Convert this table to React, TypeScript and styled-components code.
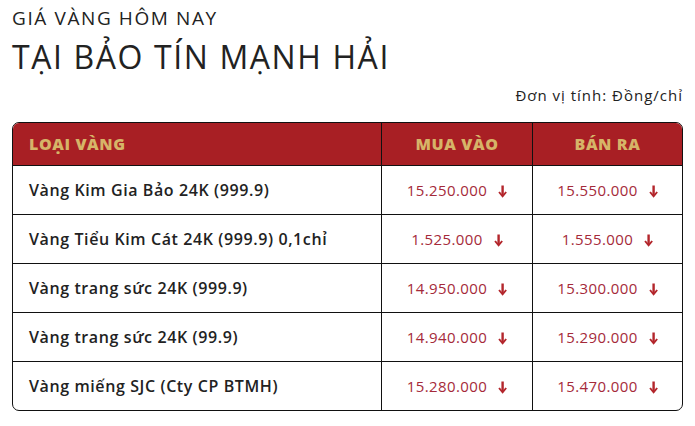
import React from 'react';
import styled, { createGlobalStyle } from 'styled-components';

const GlobalStyle = createGlobalStyle`
  body {
    margin: 0;
    background: #ffffff;
    font-family: "Open Sans", "Noto Sans", sans-serif;
    color: #222222;
  }
`;

interface PriceRow {
  name: string;
  buy: string;
  sell: string;
}

const rows: PriceRow[] = [
  { name: 'Vàng Kim Gia Bảo 24K (999.9)', buy: '15.250.000', sell: '15.550.000' },
  { name: 'Vàng Tiểu Kim Cát 24K (999.9) 0,1chỉ', buy: '1.525.000', sell: '1.555.000' },
  { name: 'Vàng trang sức 24K (999.9)', buy: '14.950.000', sell: '15.300.000' },
  { name: 'Vàng trang sức 24K (99.9)', buy: '14.940.000', sell: '15.290.000' },
  { name: 'Vàng miếng SJC (Cty CP BTMH)', buy: '15.280.000', sell: '15.470.000' },
];

const DownArrow: React.FC = () => (
  <ArrowIcon width="9" height="13" viewBox="0 0 9 13">
    <rect x="3.4" y="0.5" width="2.4" height="10" fill="#b3262c" />
    <path d="M0.3 7.4 L4.6 12.8 L8.9 7.4 L7.4 6.5 L4.6 10 L1.8 6.5 Z" fill="#b3262c" />
  </ArrowIcon>
);

const App: React.FC = () => {
  return (
    <>
      <GlobalStyle />
      <Page>
        <Heading>
          <Kicker>GIÁ VÀNG HÔM NAY</Kicker>
          <Title>TẠI BẢO TÍN MẠNH HẢI</Title>
        </Heading>
        <Unit>Đơn vị tính: Đồng/chỉ</Unit>
        <Table>
          <thead>
            <tr>
              <HeadCell $align="left">LOẠI VÀNG</HeadCell>
              <HeadCell>MUA VÀO</HeadCell>
              <HeadCell>BÁN RA</HeadCell>
            </tr>
          </thead>
          <tbody>
            {rows.map((row) => (
              <tr key={row.name}>
                <NameCell>{row.name}</NameCell>
                <PriceCell>
                  <Price>
                    {row.buy}
                    <DownArrow />
                  </Price>
                </PriceCell>
                <PriceCell>
                  <Price>
                    {row.sell}
                    <DownArrow />
                  </Price>
                </PriceCell>
              </tr>
            ))}
          </tbody>
        </Table>
      </Page>
    </>
  );
};

const Page = styled.div`
  width: 671px;
  padding: 0 12px;
  display: flex;
  flex-direction: column;
`;

const Heading = styled.div`
  display: flex;
  flex-direction: column;
  padding-top: 6px;
`;

const Kicker = styled.h2`
  margin: 0;
  font-size: 19px;
  font-weight: 400;
  line-height: 24px;
  letter-spacing: 1.6px;
  color: #222;
`;

const Title = styled.h1`
  margin: 0;
  margin-top: 7px;
  font-size: 32px;
  font-weight: 400;
  line-height: 40px;
  letter-spacing: 1.6px;
  color: #222;
`;

const Unit = styled.div`
  align-self: flex-end;
  margin-top: 8px;
  font-size: 15px;
  line-height: 20px;
  letter-spacing: 1px;
  color: #222;
`;

const Table = styled.table`
  margin-top: 17px;
  width: 100%;
  border-collapse: separate;
  border-spacing: 0;
  border: 1px solid #111;
  border-radius: 7px;
  overflow: hidden;

  tr > * {
    border-right: 1px solid #111;
    border-bottom: 1px solid #111;
  }
  tr > *:last-child {
    border-right: none;
  }
  tbody tr:last-child > * {
    border-bottom: none;
  }
`;

const HeadCell = styled.th<{ $align?: 'left' | 'center' }>`
  height: 42px;
  padding: 0 16px;
  background: #a81f24;
  color: #d6b468;
  font-weight: 800;
  font-size: 16px;
  letter-spacing: 0.6px;
  text-align: ${(p) => p.$align || 'center'};
  &:first-child {
    width: 336px;
  }
  &:nth-child(2) {
    width: 118px;
  }
`;

const NameCell = styled.td`
  height: 48px;
  padding: 0 16px;
  font-size: 16px;
  font-weight: 600;
  letter-spacing: 0.6px;
  color: #222;
`;

const PriceCell = styled.td`
  height: 48px;
  padding: 0;
  text-align: center;
`;

const Price = styled.span`
  display: inline-flex;
  align-items: center;
  gap: 11px;
  color: #a52a3a;
  font-size: 15px;
  letter-spacing: 0.4px;
`;

const ArrowIcon = styled.svg`
  flex: none;
  margin-top: 3px;
`;

export default App;
